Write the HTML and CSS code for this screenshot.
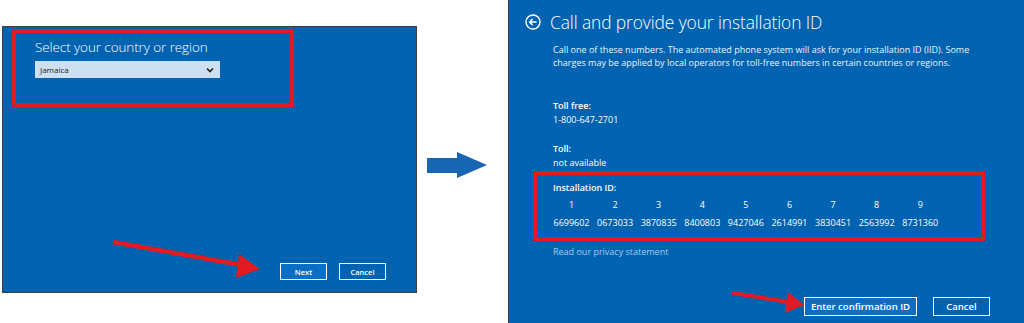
FILE: index.html
```html
<!DOCTYPE html>
<html lang="en">

<head>
    <meta charset="UTF-8">
    <meta name="viewport" content="width=device-width, initial-scale=1.0">
    <title>Activation by phone</title>
    <link rel="stylesheet" href="styles.css">
</head>

<body>
    <div class="page">
        <div class="left-col">
            <section class="window small">
                <div class="mark region-box">
                    <h2 class="pick-title">Select your country or region</h2>
                    <div class="select">
                        <span>Jamaica</span>
                        <svg width="8" height="6" viewBox="0 0 8 6">
                            <path d="M1 1.5 L4 4.5 L7 1.5" fill="none" stroke="#222" stroke-width="1.6"/>
                        </svg>
                    </div>
                </div>
                <div class="actions small-actions">
                    <button class="btn primary" type="button">Next</button>
                    <button class="btn" type="button">Cancel</button>
                </div>
            </section>
        </div>

        <div class="gap-col">
            <svg width="91" height="323" viewBox="417 0 91 323">
                <rect x="427" y="158" width="31" height="15" fill="#1765b3"/>
                <polygon points="457,152 487,165 457,178" fill="#1765b3"/>
            </svg>
        </div>

        <section class="window big">
            <div class="head">
                <svg width="16" height="16" viewBox="0 0 16 16">
                    <circle cx="8" cy="8" r="7" fill="none" stroke="#fff" stroke-width="1.4"/>
                    <path d="M11.5 8 H4.8 M7.6 5 L4.6 8 L7.6 11" fill="none" stroke="#fff" stroke-width="1.5"/>
                </svg>
                <h1>Call and provide your installation ID</h1>
            </div>
            <div class="copy">
                <p class="intro">Call one of these numbers. The automated phone system will ask for your installation ID (IID). Some charges may be applied by local operators for toll-free numbers in certain countries or regions.</p>

                <div class="label first">Toll free:</div>
                <div class="value">1-800-647-2701</div>

                <div class="label second">Toll:</div>
                <div class="value">not available</div>

                <div class="mark iid-box">
                    <div class="label">Installation ID:</div>
                    <div class="iid-grid heads">
                        <span>1</span><span>2</span><span>3</span><span>4</span><span>5</span><span>6</span><span>7</span><span>8</span><span>9</span>
                    </div>
                    <div class="iid-grid nums">
                        <span>6699602</span><span>0673033</span><span>3870835</span><span>8400803</span><span>9427046</span><span>2614991</span><span>3830451</span><span>2563992</span><span>8731360</span>
                    </div>
                </div>

                <div class="privacy">Read our privacy statement</div>
            </div>
            <div class="actions big-actions">
                <button class="btn primary" type="button">Enter confirmation ID</button>
                <button class="btn" type="button">Cancel</button>
            </div>
        </section>

        <!-- red annotation arrows drawn over the screenshots -->
        <svg class="annot" width="1024" height="323" viewBox="0 0 1024 323">
            <line x1="113" y1="242" x2="242" y2="265" stroke="#e21b22" stroke-width="4.5"/>
            <polygon points="239,254 260,269 236,278" fill="#e21b22"/>
            <line x1="732" y1="293" x2="789" y2="302" stroke="#e21b22" stroke-width="4"/>
            <polygon points="788,292 804,305 785,313" fill="#e21b22"/>
        </svg>
    </div>
</body>

</html>
```

FILE: styles.css
```css
* {
    padding: 0;
    margin: 0;
    box-sizing: border-box;
    font-family: "Open Sans", Arial, sans-serif;
}

body {
    background-color: #fff;
    width: 1024px;
    height: 323px;
    overflow: hidden;
}

.page {
    position: relative;
    display: flex;
    width: 1024px;
    height: 323px;
}

.left-col {
    width: 417px;
    padding: 26px 0 0 2px;
}

.gap-col {
    width: 91px;
}

.window {
    background-color: #0063b1;
    color: #fff;
    display: flex;
    flex-direction: column;
}

.small {
    width: 415px;
    height: 267px;
    border: 1px solid #3b3f45;
}

.big {
    width: 516px;
    height: 323px;
    border-left: 1px solid #3b3f45;
    padding: 9px 34px 7px 16px;
}

.mark {
    border: 4px solid #e21b22;
}

.region-box {
    width: 282px;
    height: 78px;
    margin: 2px 0 0 9px;
    padding: 6px 0 0 19px;
}

.pick-title {
    font-size: 13.5px;
    font-weight: 300;
    line-height: 17px;
    letter-spacing: -0.1px;
}

.select {
    width: 185px;
    height: 17px;
    margin-top: 5px;
    background-color: #cde0f1;
    color: #1d1d1d;
    display: flex;
    justify-content: space-between;
    align-items: center;
    padding: 0 6px 0 5px;
    font-size: 8px;
}

.actions {
    margin-top: auto;
    display: flex;
    justify-content: flex-end;
}

.btn {
    background: transparent;
    border: 1.5px solid #fff;
    color: #fff;
    font-weight: 600;
}

.btn.primary {
    background-color: #0a6fc4;
}

.small-actions {
    gap: 12px;
    padding: 0 30px 12px 0;
}

.small-actions .btn {
    width: 47px;
    height: 17px;
    font-size: 7.5px;
}

.big-actions {
    gap: 16px;
}

.big-actions .btn {
    height: 19px;
    font-size: 9.5px;
}

.big-actions .primary {
    width: 113px;
}

.big-actions .btn:last-child {
    width: 57px;
}

.head {
    display: flex;
    align-items: center;
    gap: 9px;
    height: 26px;
}

.head h1 {
    font-size: 17.4px;
    font-weight: 300;
    letter-spacing: -0.1px;
}

.copy {
    margin-left: 28px;
    font-size: 9px;
    line-height: 13px;
}

.intro {
    margin-top: 8px;
    width: 430px;
    color: #eef4fa;
}

.label {
    font-weight: 600;
    line-height: 14px;
}

.value {
    line-height: 14px;
}

.first {
    margin-top: 30px;
}

.second {
    margin-top: 15px;
}

.iid-box {
    width: 452px;
    margin: 1px 0 0 -20px;
    padding: 6px 0 7px 16px;
}

.iid-grid {
    display: grid;
    grid-template-columns: repeat(9, 37px);
    column-gap: 6.6px;
    text-align: center;
    line-height: 14px;
}

.heads {
    margin-top: 3px;
}

.nums {
    margin-top: 4px;
}

.privacy {
    margin-top: 4px;
    line-height: 14px;
    color: #a9c9ea;
}

.annot {
    position: absolute;
    left: 0;
    top: 0;
    pointer-events: none;
}
```
